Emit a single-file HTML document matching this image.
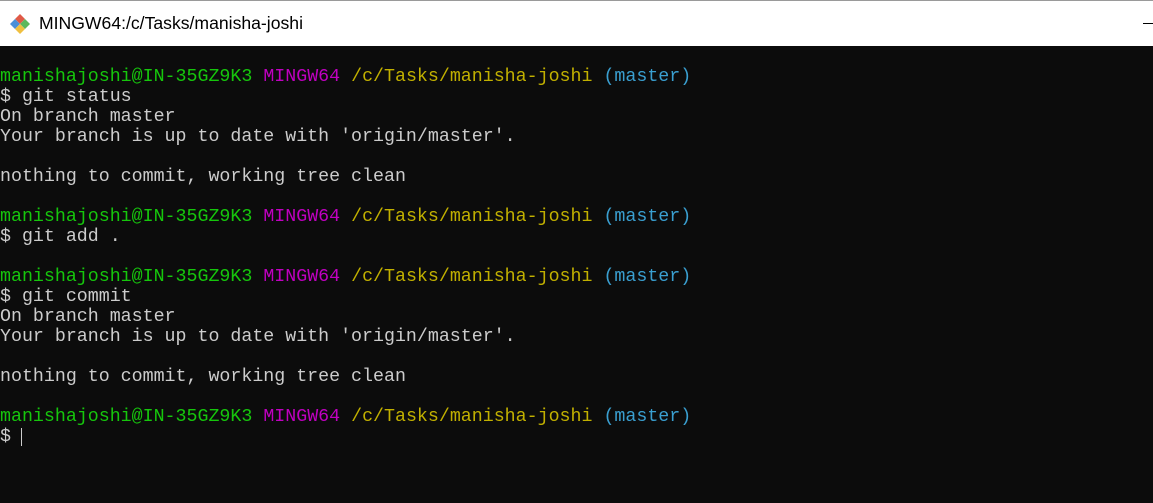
<!DOCTYPE html>
<html><head><style>
body{margin:0;width:1153px;height:503px;overflow:hidden;background:#0c0c0c;}
.tb{position:absolute;left:0;top:0;width:1153px;height:46px;background:#fff;border-top:1px solid #9a9a9a;box-sizing:border-box;}
.tt{position:absolute;left:39px;top:12px;font:17.6px "Liberation Sans",sans-serif;color:#000;}
.min{position:absolute;left:1143px;top:22px;width:10px;height:1px;background:#000;}
pre{position:absolute;left:0;top:67px;margin:0;font:18.3px/20px "Liberation Mono",monospace;color:#cccccc;}
.g{color:#16c60c}.m{color:#c000c0}.y{color:#c1b000}.c{color:#3a9fd0}
.cur{position:absolute;left:21px;top:428px;width:1px;height:18px;background:#ccc;}
</style></head><body>
<div class="tb">
<svg style="position:absolute;left:9px;top:12px" width="22" height="22" viewBox="0 0 22 22">
<path d="M11 1 L16 6 L11 11 L6 6Z" fill="#e05a47"/>
<path d="M1 11 L6 6 L11 11 L6 16Z" fill="#4a90d9"/>
<path d="M21 11 L16 6 L11 11 L16 16Z" fill="#5cb85c"/>
<path d="M11 21 L6 16 L11 11 L16 16Z" fill="#f0c040"/>
</svg>
<div class="tt">MINGW64:/c/Tasks/manisha-joshi</div>
<div class="min"></div>
</div>
<pre><span class="g">manishajoshi@IN-35GZ9K3</span> <span class="m">MINGW64</span> <span class="y">/c/Tasks/manisha-joshi</span> <span class="c">(master)</span>
$ git status
On branch master
Your branch is up to date with 'origin/master'.

nothing to commit, working tree clean

<span class="g">manishajoshi@IN-35GZ9K3</span> <span class="m">MINGW64</span> <span class="y">/c/Tasks/manisha-joshi</span> <span class="c">(master)</span>
$ git add .

<span class="g">manishajoshi@IN-35GZ9K3</span> <span class="m">MINGW64</span> <span class="y">/c/Tasks/manisha-joshi</span> <span class="c">(master)</span>
$ git commit
On branch master
Your branch is up to date with 'origin/master'.

nothing to commit, working tree clean

<span class="g">manishajoshi@IN-35GZ9K3</span> <span class="m">MINGW64</span> <span class="y">/c/Tasks/manisha-joshi</span> <span class="c">(master)</span>
$</pre>
<div class="cur"></div>
</body></html>
